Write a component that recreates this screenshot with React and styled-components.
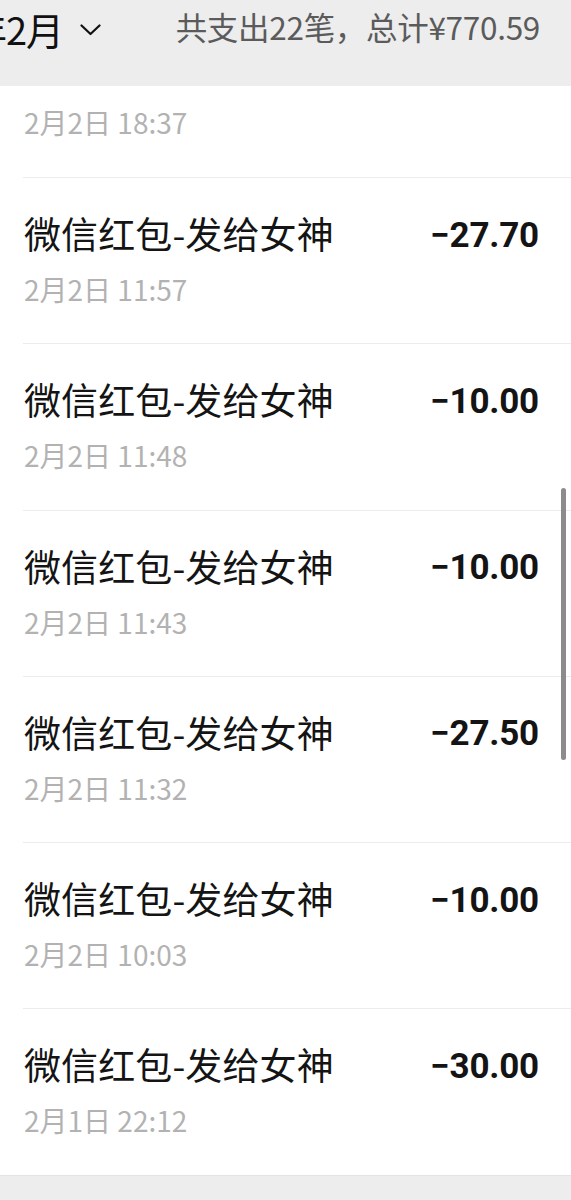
import React from "react"
import styled, { createGlobalStyle } from "styled-components"

const GlobalStyle = createGlobalStyle`
  html, body {
    margin: 0;
    padding: 0;
    background: #ededed;
  }
  body {
    font-family: "Noto Sans CJK SC", "Noto Sans", sans-serif;
    overflow: hidden;
  }
`

const records = [
  { title: "微信红包-发给女神", amount: "−27.70", time: "2月2日 11:57" },
  { title: "微信红包-发给女神", amount: "−10.00", time: "2月2日 11:48" },
  { title: "微信红包-发给女神", amount: "−10.00", time: "2月2日 11:43" },
  { title: "微信红包-发给女神", amount: "−27.50", time: "2月2日 11:32" },
  { title: "微信红包-发给女神", amount: "−10.00", time: "2月2日 10:03" },
  { title: "微信红包-发给女神", amount: "−30.00", time: "2月1日 22:12" },
]

const Page = styled.div`
  position: relative;
  width: 571px;
  height: 1200px;
  overflow: hidden;
  background: #ededed;
`

const Header = styled.div`
  height: 86px;
  display: flex;
  align-items: flex-start;
  justify-content: space-between;
  padding: 3px 31px 0 0;
  box-sizing: border-box;
  overflow: hidden;
`

const MonthPicker = styled.div`
  display: flex;
  align-items: center;
  margin-left: -31px;
`

const Month = styled.span`
  font-size: 38px;
  line-height: 52px;
  color: #111;
  letter-spacing: -1px;
`

const Chevron = styled.svg`
  width: 21px;
  height: 12px;
  margin-left: 17px;
  margin-top: 2px;
`

const Summary = styled.span`
  font-size: 31.5px;
  line-height: 46px;
  color: #5b5b5b;
  letter-spacing: -0.3px;
`

const List = styled.div`
  background: #fff;
  border-bottom: 1px solid #e3e3e3;
`

const Row = styled.div`
  margin-left: 23px;
  padding: ${(p) => (p.$partial ? "18px 31px 37px 1px" : "32px 31px 36.3px 1px")};
  border-top: ${(p) => (p.$partial ? "none" : "1px solid #ececec")};
  display: flex;
  flex-direction: column;
`

const TopLine = styled.div`
  display: flex;
  justify-content: space-between;
  align-items: center;
  height: 46px;
`

const Title = styled.span`
  font-size: 37px;
  color: #141414;
  letter-spacing: 0.1px;
`

const Amount = styled.span`
  font-family: Roboto, "Liberation Sans", sans-serif;
  font-weight: 700;
  font-size: 35px;
  color: #141414;
  margin-top: 4px;
  margin-right: 1px;
  letter-spacing: -0.2px;
`

const Time = styled.span`
  font-size: 28px;
  line-height: 36px;
  color: #b2b2b2;
  margin-top: ${(p) => (p.$partial ? "0" : "15px")};
`

const ScrollThumb = styled.div`
  position: absolute;
  right: 5px;
  top: 488px;
  width: 5px;
  height: 272px;
  border-radius: 3px;
  background: #8c8c8c;
`

export default function App() {
  return (
    <Page>
      <GlobalStyle />
      <Header>
        <MonthPicker>
          <Month>年2月</Month>
          <Chevron viewBox="0 0 21 12" fill="none">
            <path d="M1.5 1.5 L10.5 10 L19.5 1.5" stroke="#111" strokeWidth="2.2" strokeLinecap="round" strokeLinejoin="round" />
          </Chevron>
        </MonthPicker>
        <Summary>共支出22笔，总计¥770.59</Summary>
      </Header>
      <List>
        <Row $partial>
          <Time $partial>2月2日 18:37</Time>
        </Row>
        {records.map((r, i) => (
          <Row key={i}>
            <TopLine>
              <Title>{r.title}</Title>
              <Amount>{r.amount}</Amount>
            </TopLine>
            <Time>{r.time}</Time>
          </Row>
        ))}
      </List>
      <ScrollThumb />
    </Page>
  )
}
